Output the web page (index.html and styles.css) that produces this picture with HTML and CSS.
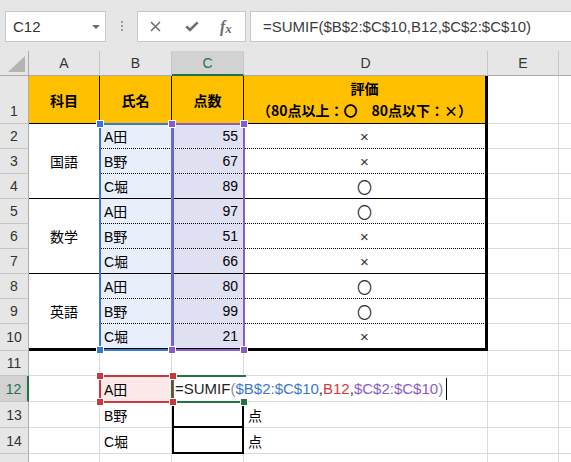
FILE: index.html
```html
<!DOCTYPE html>
<html lang="ja">
<head>
<meta charset="utf-8">
<title>SUMIF</title>
<link rel="stylesheet" href="styles.css">
</head>
<body>
<div class="topbar">
  <div class="namebox"><span>C12</span><span class="nb-arrow"></span></div>
  <div class="grip"><i></i><i></i><i></i></div>
  <div class="fxbtns">
    <svg class="ic ic-x" width="11" height="11" viewBox="0 0 11 11"><path d="M1 1L10 10M10 1L1 10"/></svg>
    <svg class="ic ic-ok" width="14" height="11" viewBox="0 0 14 11"><path d="M1.3 5.3L5 9L12.7 1.3"/></svg>
    <span class="fx">f<span class="fx-x">x</span></span>
  </div>
  <div class="finput">=SUMIF($B$2:$C$10,B12,$C$2:$C$10)</div>
</div>

<div class="sheet">
  <div class="corner"><svg width="28" height="24" viewBox="0 0 28 24"><polygon points="8,21 25,5 25,21"/></svg></div>
  <div class="ch">A</div><div class="ch">B</div><div class="ch sel">C</div><div class="ch">D</div><div class="ch">E</div><div class="ch last"></div>

  <div class="rh bottom">1</div>
  <div class="c hd">科目</div><div class="c hd">氏名</div><div class="c hd">点数</div>
  <div class="c hd hd-d"><span>評価</span><span>（80点以上：〇　80点以下：×）</span></div>
  <div class="c"></div><div class="c f"></div>

  <div class="rh">2</div>
  <div class="c grp">国語</div>
  <div class="c nm dot">A田</div><div class="c num dot">55</div><div class="c ev dot">×</div><div class="c"></div><div class="c f"></div>
  <div class="rh">3</div>
  <div class="c nm dot">B野</div><div class="c num dot">67</div><div class="c ev dot">×</div><div class="c"></div><div class="c f"></div>
  <div class="rh">4</div>
  <div class="c nm sol">C堀</div><div class="c num sol">89</div><div class="c ev sol">〇</div><div class="c"></div><div class="c f"></div>

  <div class="rh">5</div>
  <div class="c grp">数学</div>
  <div class="c nm dot">A田</div><div class="c num dot">97</div><div class="c ev dot">〇</div><div class="c"></div><div class="c f"></div>
  <div class="rh">6</div>
  <div class="c nm dot">B野</div><div class="c num dot">51</div><div class="c ev dot">×</div><div class="c"></div><div class="c f"></div>
  <div class="rh">7</div>
  <div class="c nm sol">C堀</div><div class="c num sol">66</div><div class="c ev sol">×</div><div class="c"></div><div class="c f"></div>

  <div class="rh">8</div>
  <div class="c grp last">英語</div>
  <div class="c nm dot">A田</div><div class="c num dot">80</div><div class="c ev dot">〇</div><div class="c"></div><div class="c f"></div>
  <div class="rh">9</div>
  <div class="c nm dot">B野</div><div class="c num dot">99</div><div class="c ev dot">〇</div><div class="c"></div><div class="c f"></div>
  <div class="rh">10</div>
  <div class="c nm thick">C堀</div><div class="c num thick">21</div><div class="c ev thick">×</div><div class="c"></div><div class="c f"></div>

  <div class="rh">11</div>
  <div class="c"></div><div class="c"></div><div class="c"></div><div class="c"></div><div class="c"></div><div class="c f"></div>

  <div class="rh sel">12</div>
  <div class="c"></div>
  <div class="c pk">A田</div>
  <div class="c edit"><span class="formula"><span class="f-k">=SUMIF</span><span class="f-par">(</span><span class="f-b">$B$2:$C$10</span><span class="f-k">,</span><span class="f-r">B12</span><span class="f-k">,</span><span class="f-p">$C$2:$C$10</span><span class="f-par">)</span><span class="caret"></span></span></div>
  <div class="c"></div><div class="c"></div><div class="c f"></div>

  <div class="rh">13</div>
  <div class="c"></div><div class="c txt">B野</div><div class="c box"></div><div class="c txt">点</div><div class="c"></div><div class="c f"></div>
  <div class="rh">14</div>
  <div class="c"></div><div class="c txt">C堀</div><div class="c box"></div><div class="c txt">点</div><div class="c"></div><div class="c f"></div>
  <div class="rh">15</div>
  <div class="c"></div><div class="c"></div><div class="c"></div><div class="c"></div><div class="c"></div><div class="c f"></div>

  <div class="rng rng-b"><span class="hdl tl"></span><span class="hdl bl"></span></div>
  <div class="rng rng-c"><span class="hdl tl"></span><span class="hdl tr"></span><span class="hdl bl"></span><span class="hdl br"></span></div>
  <div class="rng rng-r"><span class="hdl tl"></span><span class="hdl tr"></span><span class="hdl bl"></span><span class="hdl br"></span></div>
  <div class="rng rng-g"><span class="hdl fillh"></span></div>
</div>
</body>
</html>
```

FILE: styles.css
```css
* { box-sizing: border-box; }
html, body { margin: 0; padding: 0; }
body {
  width: 571px;
  height: 462px;
  overflow: hidden;
  background: #fff;
  color: #000;
  font-family: "Liberation Sans", "Noto Sans CJK JP", sans-serif;
}

/* ---------- formula bar ---------- */
.topbar {
  height: 51px;
  background: #e6e6e6;
  display: flex;
  align-items: flex-start;
  padding: 11px 0 0 5px;
}
.namebox {
  width: 101px;
  height: 31px;
  background: #fff;
  border: 1px solid #c8c8c8;
  display: flex;
  align-items: center;
  justify-content: space-between;
  padding: 0 5px 0 7px;
  font-size: 15px;
  color: #333;
}
.nb-arrow {
  width: 0;
  height: 0;
  border-left: 4px solid transparent;
  border-right: 4px solid transparent;
  border-top: 4px solid #6b6b6b;
  margin-top: 1px;
}
.grip {
  width: 31px;
  display: flex;
  flex-direction: column;
  gap: 2px;
  padding: 10px 0 0 15px;
}
.grip i {
  display: block;
  width: 2px;
  height: 2px;
  background: #9c9c9c;
}
.fxbtns {
  width: 109px;
  height: 31px;
  background: #fff;
  border: 1px solid #c8c8c8;
  display: flex;
  align-items: center;
  padding-left: 12px;
}
.ic { display: block; fill: none; stroke: #6d6d6d; }
.ic-x { stroke-width: 1.5; }
.ic-ok { margin-left: 24px; stroke-width: 2.6; }
.fx {
  margin-left: 21px;
  font-family: "Liberation Serif", serif;
  font-style: italic;
  font-weight: bold;
  font-size: 16px;
  color: #6d6d6d;
  line-height: 1;
}
.fx-x { font-size: 13px; position: relative; top: 1px; }
.finput {
  margin-left: 4px;
  flex: 1;
  height: 31px;
  background: #fff;
  border: 1px solid #c8c8c8;
  border-right: 0;
  padding-left: 12px;
  display: flex;
  align-items: center;
  font-size: 15px;
  color: #3b3b3b;
  white-space: nowrap;
}

/* ---------- sheet grid ---------- */
.sheet {
  position: relative;
  display: grid;
  grid-template-columns: 29px 71px 72px 72px 244px 71px 12px;
  grid-template-rows: 25px 48px repeat(8, 25px) 27px 25px repeat(4, 26px);
}
.corner {
  background: #e6e6e6;
  border-right: 1px solid #ababab;
  border-bottom: 1px solid #ababab;
}
.corner svg { display: block; fill: #b4b4b4; }
.ch {
  background: #e6e6e6;
  border-right: 1px solid #c6c6c6;
  border-bottom: 1px solid #ababab;
  display: flex;
  align-items: center;
  justify-content: center;
  font-size: 14px;
  color: #333;
}
.ch.sel {
  background: #d2d2d2;
  border-bottom: 2px solid #217346;
  color: #217346;
}
.ch.last { border-right: 0; }
.rh {
  background: #e6e6e6;
  border-right: 1px solid #ababab;
  border-bottom: 1px solid #c6c6c6;
  display: flex;
  align-items: center;
  justify-content: center;
  font-size: 14px;
  color: #333;
}
.rh.bottom { align-items: flex-end; padding-bottom: 4px; }
.rh.sel {
  background: #d2d2d2;
  border-right: 2px solid #217346;
  color: #217346;
}

.c {
  border-right: 1px solid #dadada;
  border-bottom: 1px solid #dadada;
  display: flex;
  align-items: center;
  font-size: 14px;
  white-space: nowrap;
  min-width: 0;
}
.c.f { border-right: 0; }

.hd {
  background: #ffc000;
  font-family: "Noto Sans CJK JP", "Liberation Sans", sans-serif;
  font-weight: bold;
  justify-content: center;
  border-right: 1px solid #000;
  border-bottom: 1px solid #000;
  line-height: 22px;
}
.hd-d {
  flex-direction: column;
  border-right: 3px solid #000;
  padding-bottom: 1px;
}

.grp {
  grid-row: span 3;
  justify-content: center;
  border-right: 1px solid #000;
  border-bottom: 1px solid #000;
}
.grp.last { border-bottom: 3px solid #000; }
.nm {
  background: #e8eefa;
  padding-left: 4px;
  border-right: 1px solid #000;
}
.num {
  background: #e0e0f3;
  justify-content: flex-end;
  padding-right: 5px;
  border-right: 1px solid #000;
}
.ev {
  justify-content: center;
  border-right: 3px solid #000;
  color: #333;
  font-size: 15px;
}
.dot { border-bottom: 1px dotted #000; }
.sol { border-bottom: 1px solid #000; }
.thick { border-bottom: 3px solid #000; }

.pk { background: #fbe9ea; padding-left: 4px; }
.txt { padding-left: 4px; }
.edit {
  overflow: visible;
  padding-left: 3px;
  font-size: 15px;
  border-right-color: transparent;
}
.formula {
  flex-shrink: 0;
  display: flex;
  align-items: center;
}
.f-k { color: #1f1f1f; }
.f-par { color: #8a8a9a; }
.f-b { color: #3a78d0; }
.f-r { color: #d0393f; }
.f-p { color: #8a5cc5; }
.caret {
  flex-shrink: 0;
  display: block;
  width: 1px;
  height: 22px;
  background: #000;
  margin-left: 3px;
}
.box {
  border-left: 2px solid #000;
  border-right: 2px solid #000;
  border-bottom: 2px solid #000;
}

/* ---------- selection overlays ---------- */
.rng { position: absolute; border: 2px solid; }
.rng-b { left: 99px; top: 72px; width: 75px; height: 228px; border-color: #3a78d0; }
.rng-c { left: 171px; top: 72px; width: 74px; height: 228px; border-color: #8a5cc5; }
.rng-r { left: 99px; top: 324px; width: 75px; height: 28px; border-color: #c8383f; }
.rng-g { left: 171px; top: 324px; width: 75px; height: 28px; border-color: #217346; border-right: 0; }
.hdl {
  position: absolute;
  width: 8px;
  height: 8px;
  border: 1px solid #fff;
  z-index: 2;
}
.rng-b .hdl { background: #3a78d0; }
.rng-c .hdl { background: #8a5cc5; }
.rng-r .hdl { background: #c8383f; }
.rng-g .hdl { background: #217346; }
.tl { left: -5px; top: -5px; }
.tr { right: -5px; top: -5px; }
.bl { left: -5px; bottom: -5px; }
.br { right: -5px; bottom: -5px; }
.fillh { right: -2px; bottom: -5px; }
```
